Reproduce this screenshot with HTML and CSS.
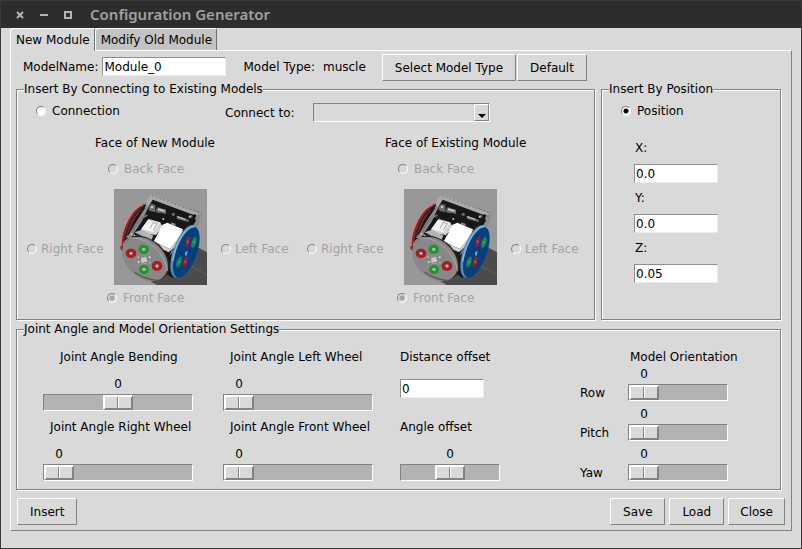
FILE: index.html
```html
<!DOCTYPE html>
<html lang="en">
<head>
<meta charset="utf-8">
<title>Configuration Generator</title>
<link rel="stylesheet" href="styles.css">
</head>
<body>
<svg class="defs" aria-hidden="true">
  <symbol id="robot" viewBox="0 0 279 288">
    <rect width="279" height="288" fill="#989898"/>
    <path d="M250 174 279 190V288H128L60 246 100 220Z" fill="#4b4b4b"/>
    <path d="M214 222 279 258" stroke="#6a6a6a" stroke-width="2"/>
    <path d="M256 50 279 20" stroke="#a4a4a4" stroke-width="2"/>
    <path d="M88 45C56 50 16 120 18 170q2 16 8 14l14-40 56-94Z" fill="#7c2c2e"/>
    <path d="M86 46C56 54 18 116 20 172" fill="none" stroke="#c98684" stroke-width="6"/>
    <path d="M92 52C66 62 38 110 32 158" fill="none" stroke="#222" stroke-width="4"/>
    <path d="M112 18 262 72 240 120 176 268 150 250 34 150 62 90Z" fill="#171717"/>
    <path d="M98 46 66 98 36 146 50 148 84 96 112 36Z" fill="#8a8a8a"/>
    <path d="M92 56 62 102 42 138" fill="none" stroke="#1c1c1c" stroke-width="4"/>
    <path d="M56 132Q66 92 100 78" fill="none" stroke="#777" stroke-width="5"/>
    <path d="M94 46 100 30 112 16 262 72 256 84 116 32 102 54Z" fill="#a9a9a9"/>
    <path d="M114 20 260 73" stroke="#555" stroke-width="2" stroke-dasharray="5 7"/>
    <path d="M246 78 263 72 254 108 204 160 166 200 174 182 240 104Z" fill="#8c8c8c"/>
    <path d="M244 92 210 142 176 184" fill="none" stroke="#111" stroke-width="6"/>
    <circle cx="242" cy="80" r="4" fill="#111"/>
    <g fill="#6c6c6c">
      <path d="m110 44 14 4v22l-14-4ZM130 54l26 8v13l-26-6Z"/>
      <circle cx="113" cy="58" r="9"/><circle cx="134" cy="64" r="8"/>
      <path d="m188 80 36 12v8l-36-11Z"/><circle cx="178" cy="76" r="5"/>
      <circle cx="230" cy="82" r="5"/>
    </g>
    <g fill="#c8c8c8">
      <circle cx="114" cy="54" r="4"/><path d="m132 58 20 6v5l-20-5ZM190 81l24 8v4l-24-8Z"/>
      <circle cx="148" cy="90" r="3"/><circle cx="227" cy="83" r="3"/>
      <path d="m171 100 14 4v6l-14-4Z" fill="#888"/>
    </g>
    <path d="M82 120 104 90 139 100 146 116 126 138 78 132Z" fill="#d2d2d2"/>
    <path d="M102 92 138 102 118 130 82 120Z" fill="#f4f4f4"/>
    <path d="m118 100-10 18M130 104l-12 20M118 100l12 4" fill="none" stroke="#777" stroke-width="2"/>
    <path d="M62 130 84 122 118 140 110 158Z" fill="#b5b5b5"/>
    <path d="M144 108 160 101 207 121 200 142 168 180 118 158 132 134Z" fill="#fff"/>
    <path d="m118 158 50 22 32-38-5 24-31 23-48-20Z" fill="#d2d2d2"/>
    <path d="m50 134 116 54" stroke="#cfcfcf" stroke-width="4" stroke-dasharray="6 3"/>
    <path d="m70 136 70 34" stroke="#222" stroke-width="6" stroke-dasharray="3 4"/>
    <ellipse cx="98" cy="207" rx="54" ry="79" transform="rotate(-48 98 207)" fill="#252525"/>
    <ellipse cx="93" cy="210" rx="56" ry="77" transform="rotate(-48 93 210)" fill="#888"/>
    <path d="M28 170q2-20 26-24 46 2 82 44 24 34 24 56" fill="none" stroke="#a9a9a9" stroke-width="3"/>
    <path d="M62 250q30 22 72 25" fill="none" stroke="#555" stroke-width="4"/>
    <ellipse cx="211" cy="187" rx="33" ry="83" transform="rotate(20 211 187)" fill="#4e8ac6"/>
    <ellipse cx="217" cy="190" rx="31" ry="80" transform="rotate(20 217 190)" fill="#073f7b"/>
    <path d="M242 112c-26 0-56 48-66 104" fill="none" stroke="#7fb6e4" stroke-width="5"/>
    <g fill="#1b9a2b">
      <ellipse cx="89" cy="181" rx="16" ry="14"/><ellipse cx="90" cy="241" rx="15" ry="14"/>
      <ellipse cx="240" cy="160" rx="7" ry="17" transform="rotate(18 240 160)" fill="#168747"/>
      <ellipse cx="195" cy="219" rx="7" ry="17" transform="rotate(18 195 219)" fill="#168747"/>
    </g>
    <g fill="#a81c22">
      <ellipse cx="51" cy="193" rx="16" ry="14"/><ellipse cx="129" cy="231" rx="16" ry="15"/>
      <ellipse cx="221" cy="158" rx="7" ry="17" transform="rotate(18 221 158)" fill="#8e1d38"/>
      <ellipse cx="214" cy="218" rx="7" ry="16" transform="rotate(18 214 218)" fill="#8e1d38"/>
    </g>
    <g fill="#b9b9b9">
      <circle cx="89" cy="181" r="5"/><circle cx="90" cy="241" r="5"/>
      <circle cx="51" cy="193" r="5"/><circle cx="129" cy="231" r="5"/>
    </g>
    <g fill="#6695bd">
      <ellipse cx="240" cy="160" rx="2" ry="4"/><ellipse cx="195" cy="219" rx="2" ry="4"/>
      <ellipse cx="221" cy="158" rx="2" ry="4"/><ellipse cx="214" cy="218" rx="2" ry="4"/>
    </g>
    <path d="m82 206 14-2 5 19-20 3Z" fill="#c9c9c9"/>
    <path d="m80 223 21-3" stroke="#555" stroke-width="2"/>
    <path d="m213 190 9-5-5 17-4-4Z" fill="#5aa6d9"/>
    <g fill="#ddd">
      <circle cx="72" cy="204" r="2"/><circle cx="74" cy="219" r="3"/><circle cx="107" cy="205" r="3"/><circle cx="108" cy="221" r="2"/>
    </g>
  </symbol>
</svg>

<div class="window">
  <header class="titlebar">
    <button class="winbtn" type="button" aria-label="Close window"><svg width="8" height="8"><path d="M1 1 7 7M7 1 1 7"/></svg></button>
    <button class="winbtn" type="button" aria-label="Minimize"><svg width="8" height="8"><path d="M0 4H8"/></svg></button>
    <button class="winbtn" type="button" aria-label="Maximize"><svg width="8" height="8"><path d="M1 1H7V7H1Z"/></svg></button>
    <h1>Configuration Generator</h1>
  </header>

  <main class="content">
    <nav class="tabs" role="tablist">
      <button class="tab active" type="button" role="tab" aria-selected="true">New Module</button>
      <button class="tab" type="button" role="tab" aria-selected="false">Modify Old Module</button>
    </nav>

    <form class="panel">
      <div class="model-row">
        <label for="model-name">ModelName:</label>
        <input class="entry name-entry" id="model-name" type="text" value="Module_0">
        <span class="type-label">Model Type:</span>
        <span class="type-value">muscle</span>
        <button class="btn" type="button">Select Model Type</button>
        <button class="btn" type="button">Default</button>
      </div>

      <div class="groups">
        <fieldset class="group connect">
          <legend>Insert By Connecting to Existing Models</legend>
          <div class="connect-row">
            <label class="radio mode"><input type="radio" name="mode">Connection</label>
            <label class="connect-label" for="connect-to">Connect to:</label>
            <span class="combo"><select id="connect-to"><option></option></select></span>
          </div>
          <div class="pickers">
            <div class="picker" role="group" aria-labelledby="face-new">
              <h2 id="face-new">Face of New Module</h2>
              <label class="radio back"><input type="radio" name="new" disabled>Back Face</label>
              <label class="radio right"><input type="radio" name="new" disabled>Right Face</label>
              <svg class="robot" role="img" aria-label="Module"><use href="#robot"/></svg>
              <label class="radio left"><input type="radio" name="new" disabled>Left Face</label>
              <label class="radio front"><input type="radio" name="new" disabled checked>Front Face</label>
            </div>
            <div class="picker wide" role="group" aria-labelledby="face-old">
              <h2 id="face-old">Face of Existing Module</h2>
              <label class="radio back"><input type="radio" name="old" disabled>Back Face</label>
              <label class="radio right"><input type="radio" name="old" disabled>Right Face</label>
              <svg class="robot" role="img" aria-label="Module"><use href="#robot"/></svg>
              <label class="radio left"><input type="radio" name="old" disabled>Left Face</label>
              <label class="radio front"><input type="radio" name="old" disabled checked>Front Face</label>
            </div>
          </div>
        </fieldset>

        <fieldset class="group position">
          <legend>Insert By Position</legend>
          <label class="radio mode"><input type="radio" name="mode" checked>Position</label>
          <div class="coords">
            <label for="px">X:</label><input class="entry" id="px" type="text" value="0.0">
            <label for="py">Y:</label><input class="entry" id="py" type="text" value="0.0">
            <label for="pz">Z:</label><input class="entry" id="pz" type="text" value="0.05">
          </div>
        </fieldset>
      </div>

      <fieldset class="group joints">
        <legend>Joint Angle and Model Orientation Settings</legend>
        <div class="joint-grid">
          <div class="scale wheel bending" style="--pos:0.5"><label for="s1">Joint Angle Bending</label><output for="s1">0</output><input id="s1" type="range" min="-90" max="90" value="0"></div>
          <div class="scale wheel" style="--pos:0"><label for="s2">Joint Angle Left Wheel</label><output for="s2">0</output><input id="s2" type="range" min="0" max="360" value="0"></div>
          <div class="offset"><label for="dist">Distance offset</label><input class="entry" id="dist" type="text" value="0"></div>
          <div class="orientation">
            <h2>Model Orientation</h2>
            <div class="axis" style="--pos:0"><output for="o1">0</output><label for="o1">Row</label><input id="o1" type="range" min="0" max="360" value="0"></div>
            <div class="axis" style="--pos:0"><output for="o2">0</output><label for="o2">Pitch</label><input id="o2" type="range" min="0" max="360" value="0"></div>
            <div class="axis" style="--pos:0"><output for="o3">0</output><label for="o3">Yaw</label><input id="o3" type="range" min="0" max="360" value="0"></div>
          </div>
          <div class="scale wheel" style="--pos:0"><label for="s3">Joint Angle Right Wheel</label><output for="s3">0</output><input id="s3" type="range" min="0" max="360" value="0"></div>
          <div class="scale wheel" style="--pos:0"><label for="s4">Joint Angle Front Wheel</label><output for="s4">0</output><input id="s4" type="range" min="0" max="360" value="0"></div>
          <div class="scale angle" style="--pos:0.5"><label for="s5">Angle offset</label><output for="s5">0</output><input id="s5" type="range" min="-90" max="90" value="0"></div>
        </div>
      </fieldset>

      <div class="actions">
        <button class="btn insert" type="button">Insert</button>
        <button class="btn" type="button">Save</button>
        <button class="btn" type="button">Load</button>
        <button class="btn" type="button">Close</button>
      </div>
    </form>
  </main>
</div>
</body>
</html>
```
FILE: styles.css
```css
:root {
  --face: #d9d9d9;
  --dark: #828282;
  --light: #fff;
  --trough: #b3b3b3;
}

* { box-sizing: border-box; }

body {
  margin: 0;
  background: var(--face);
  color: #000;
  font: 12px/14px "DejaVu Sans", sans-serif;
}

button, input, select { font: inherit; color: inherit; margin: 0; }
h1, h2 { margin: 0; font: inherit; }
.defs { display: none; }

.window {
  min-height: 100vh;
  display: flex;
  flex-direction: column;
  border: solid #3a3a3a;
  border-width: 0 1px 1px;
}

.titlebar {
  height: 28px;
  display: flex;
  align-items: center;
  gap: 16px;
  padding-left: 15px;
  background: #2d2d2d;
  border-top: 1px solid #3c3c3c;
  color: #a0a0a0;
}
.titlebar h1 { font: 600 15px/20px "Noto Sans", sans-serif; margin: 0 0 2px 2px; }
.winbtn { display: flex; padding: 0; border: 0; background: none; color: #b4b4b4; }
.winbtn svg { fill: none; stroke: currentColor; stroke-width: 2; }

.content {
  flex: 1;
  display: flex;
  flex-direction: column;
  padding: 0 9px 17px;
}

.tabs { display: flex; }
.tab {
  height: 22px;
  padding: 0 4px 0 5px;
  border: 1px solid;
  border-color: var(--light) #6e6e6e transparent var(--light);
  border-width: 1px 1px 0 1px;
  border-radius: 3px 2px 0 0;
  background: #c3c3c3;
}
.tab.active { background: var(--face); height: 23px; margin-bottom: -1px; z-index: 1; }

.panel {
  flex: 1;
  padding: 3px 6px 5px 5px;
  border: 1px solid;
  border-color: var(--light) var(--dark) var(--dark) var(--light);
}

.btn {
  height: 27px;
  padding: 0 12px;
  border: 1px solid;
  border-color: var(--light) var(--dark) var(--dark) var(--light);
  background: var(--face);
  white-space: nowrap;
}

.entry {
  width: 84px;
  height: 19px;
  padding: 1px 1px 0;
  border: 1px solid;
  border-color: #8f8f8f #ececec #ececec #8f8f8f;
  border-radius: 0;
  background: #fff;
}

.model-row { display: flex; align-items: center; padding: 0 0 1px 7px; }
.name-entry { width: 124px; margin-left: 4px; }
.type-label { margin-left: 17px; }
.type-value { margin: 0 16px 0 8px; }
.model-row .btn + .btn { margin-left: 1px; }
.model-row label, .type-label, .type-value, .name-entry { margin-bottom: 2px; }

.groups { display: grid; grid-template-columns: 1fr 180px; gap: 6px; margin-right: 4px; }
.group {
  min-width: 0;
  margin: 0;
  padding: 0;
  border: 1px solid var(--dark);
  box-shadow: 1px 1px 0 var(--light), inset 1px 1px 0 var(--light);
}
.group legend { margin-left: 7px; padding: 0; background: var(--face); }
.connect, .position { height: 238px; }

.radio { display: flex; align-items: center; gap: 6px; white-space: nowrap; }
.radio:has(:disabled) { color: #a3a3a3; }
.radio input {
  appearance: none;
  width: 10px;
  height: 10px;
  border: 1px solid;
  border-color: var(--dark) var(--light) var(--light) var(--dark);
  border-radius: 50%;
  background: #fff;
}
.radio input:disabled { background: var(--face); }
.radio input:checked { background-image: radial-gradient(circle, #000 2px, transparent 3px); }
.radio input:checked:disabled { background-image: radial-gradient(circle, #a3a3a3 2px, transparent 3px); }

.connect-row { display: flex; align-items: center; padding: 7px 0 0 19px; }
.mode { height: 16px; }
.connect-row .mode { width: 189px; align-self: flex-start; }
.combo {
  position: relative;
  width: 177px;
  height: 19px;
  margin-left: 18px;
}
.combo select {
  appearance: none;
  display: block;
  width: 100%;
  height: 100%;
  padding: 0 16px 0 2px;
  border: 1px solid;
  border-color: var(--dark) var(--light) var(--light) var(--dark);
  border-radius: 0;
  background: var(--face);
}
.combo::before, .combo::after { content: ""; position: absolute; pointer-events: none; }
.combo::before {
  inset: 1px 1px 1px auto;
  width: 13px;
  border: 1px solid;
  border-color: var(--light) var(--dark) var(--dark) var(--light);
}
.combo::after {
  right: 4px;
  bottom: 4px;
  border: solid transparent;
  border-width: 4px 4px 0;
  border-top-color: #000;
}

.pickers { display: flex; padding: 14px 0 0 10px; }
.picker {
  display: grid;
  grid-template-columns: 87px 93px 100px;
  grid-template-rows: 14px 12px 14px 13px 96px 6px 14px;
  align-items: center;
}
.picker.wide { grid-template-columns: 97px 93px 90px; }
.picker h2 { grid-area: 1 / 1 / 2 / 4; padding-left: 68px; }
.picker.wide h2 { padding-left: 78px; }
.back { grid-area: 3 / 2 / 4 / 4; margin-left: -6px; }
.right { grid-area: 5 / 1; }
.robot { grid-area: 5 / 2; width: 93px; height: 96px; }
.left { grid-area: 5 / 3; margin-left: 14px; }
.front { grid-area: 7 / 2 / 8 / 4; margin-left: -7px; }
.right, .left { padding-top: 24px; gap: 4px; }

.position .mode { margin: 7px 0 0 19px; }
.coords { display: flex; flex-direction: column; padding: 22px 0 0 32px; }
.coords .entry { margin: 9px 0 8px; }
.coords label { padding-left: 1px; }

.joints { height: 168px; margin: 2px 4px 0 0; }
.joint-grid {
  display: grid;
  grid-template-columns: 180px 177px 180px auto;
  grid-template-rows: 61px 61px;
  row-gap: 9px;
  padding: 14px 0 0 26px;
}
.scale, .offset, .axis { display: grid; justify-content: start; }
.scale { grid-template-rows: 24px 14px 17px; row-gap: 3px; }
.wheel { grid-template-columns: 150px; }
.angle { grid-template-columns: 100px; }
.wheel label { padding-left: 7px; white-space: nowrap; }
.bending label { padding-left: 17px; }
.offset { grid-template-rows: 14px 19px; row-gap: 15px; }

output {
  width: 30px;
  margin-left: calc(1px + var(--pos) * (100% - 32px));
  text-align: center;
}

.orientation { grid-area: 1 / 4 / 3 / 5; display: flex; flex-direction: column; gap: 6px; }
.orientation h2 { margin: 0 0 -3px 50px; }
.axis { grid-template-columns: 48px 100px; grid-template-rows: 14px 17px; row-gap: 3px; align-items: center; }
.axis output { grid-column: 2; }

input[type="range"] {
  appearance: none;
  width: 100%;
  height: 17px;
  border: 1px solid;
  border-color: var(--dark) var(--light) var(--light) var(--dark);
  background: var(--trough);
}
input[type="range"]::-webkit-slider-thumb {
  appearance: none;
  width: 30px;
  height: 15px;
  border: 1px solid;
  border-color: var(--light) var(--dark) var(--dark) var(--light);
  background: linear-gradient(90deg, var(--face) 13px, var(--dark) 13px 14px, var(--light) 14px 15px, var(--face) 15px);
  box-shadow: inset 1px 1px 0 var(--light), inset -1px -1px 0 var(--dark);
}

.actions { display: flex; gap: 4px; padding: 8px 0 0 1px; }
.actions .btn { min-width: 55px; padding: 0 11px; }
.actions .insert { margin-right: auto; padding: 0 12px; }
```
